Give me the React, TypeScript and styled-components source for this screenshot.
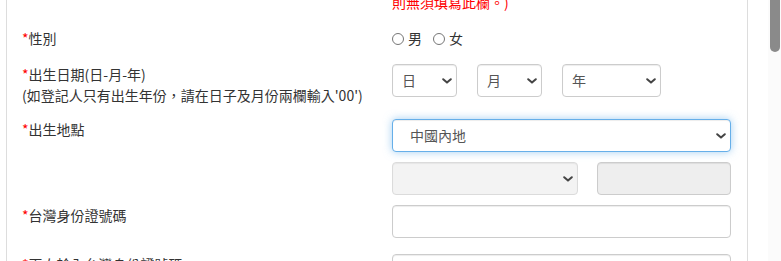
import React from "react";
import styled, { createGlobalStyle, css } from "styled-components";

const GlobalStyle = createGlobalStyle`
    html, body {
        margin: 0;
        padding: 0;
        background: #fff;
        overflow: hidden;
    }
    body {
        font-family: "Noto Sans CJK TC", "Liberation Sans", sans-serif;
        font-size: 14px;
        color: #333;
    }
`;

// --- Page shell ---
const Page = styled.div`
    display: flex;
    height: 261px;
    overflow: hidden;
`;

const Main = styled.div`
    flex: 1;
    padding-left: 6px;
    overflow: hidden;
`;

const Panel = styled.div`
    width: 742px;
    border-left: 1px solid #ddd;
    border-right: 1px solid #ddd;
    padding: 0 16px 0 15px;
    box-sizing: border-box;
    min-height: 400px;
    margin-top: -8px; // page is scrolled a little: previous help text is cut at the top
`;

// Fake browser scrollbar on the right edge
const ScrollTrack = styled.div`
    width: 13px;
    flex-shrink: 0;
    background: #fbfbfb;
    display: flex;
    justify-content: flex-end;
    padding-right: 1px;
    box-sizing: border-box;
`;

const ScrollThumb = styled.div`
    width: 10px;
    height: 52px;
    background: #8a8a8a;
    border-radius: 0 0 5px 5px;
`;

// --- Form rows ---
const FormRow = styled.div<{ $gap: number }>`
    display: grid;
    grid-template-columns: 370px 339px;
    align-items: start;
    margin-bottom: ${({ $gap }) => $gap}px;
`;

const Label = styled.label`
    line-height: 21px;
    color: #333;
`;

const Required = styled.span`
    color: #f00;
`;

const HelpText = styled.div`
    grid-column: 2;
    color: #f00;
    line-height: 20px;
`;

const Controls = styled.div`
    display: flex;
    flex-direction: column;
    gap: 10px;
`;

const InlineControls = styled.div`
    display: flex;
    align-items: center;
    gap: 20px;
`;

const SplitControls = styled.div`
    display: grid;
    grid-template-columns: 186px 1fr;
    gap: 19px;
`;

// --- Radios ---
const RadioGroup = styled.div`
    display: flex;
    align-items: center;
    height: 21px;
`;

const RadioLabel = styled.label`
    display: inline-flex;
    align-items: center;
    gap: 4px;
    margin-right: 11px;
    line-height: 21px;
`;

const Radio = styled.input.attrs({ type: "radio" })`
    appearance: none;
    width: 12px;
    height: 12px;
    margin: 0;
    border: 1px solid #767676;
    border-radius: 50%;
    background: #fff;
    box-sizing: border-box;
`;

// --- Selects & inputs ---
const controlBase = css<{ $disabled?: boolean }>`
    width: 100%;
    height: 33px;
    box-sizing: border-box;
    border: 1px solid #ccc;
    border-radius: 4px;
    background: ${({ $disabled }) => ($disabled ? "#eee" : "#fff")};
    box-shadow: inset 0 1px 1px rgba(0, 0, 0, 0.075);
    font-family: "Noto Sans CJK TC", "Liberation Sans", sans-serif;
    font-size: 14px;
    color: #555;
    outline: none;
`;

const SelectWrap = styled.div<{ $width?: number }>`
    position: relative;
    width: ${({ $width }) => ($width ? `${$width}px` : "100%")};
    flex-shrink: 0;
`;

const SelectBox = styled.select<{ $disabled?: boolean; $focused?: boolean; $indent?: number }>`
    ${controlBase};
    appearance: none;
    padding: 0 24px 0 ${({ $indent }) => $indent ?? 9}px;
    line-height: 31px;
    ${({ $focused }) =>
        $focused &&
        css`
            border-color: #66afe9;
            box-shadow: inset 0 1px 1px rgba(0, 0, 0, 0.075), 0 0 8px rgba(102, 175, 233, 0.6);
        `}
`;

const Chevron = styled.svg`
    position: absolute;
    right: 5px;
    top: 50%;
    margin-top: -3px;
    pointer-events: none;
`;

const TextInput = styled.input<{ $disabled?: boolean }>`
    ${controlBase};
    padding: 0 12px;
`;

interface SelectProps {
    value: string;
    width?: number;
    disabled?: boolean;
    focused?: boolean;
    indent?: number;
}

const Select: React.FC<SelectProps> = ({ value, width, disabled, focused, indent }) => (
    <SelectWrap $width={width}>
        <SelectBox $disabled={disabled} $focused={focused} $indent={indent} disabled={disabled} defaultValue={value}>
            <option value={value}>{value}</option>
        </SelectBox>
        <Chevron width="10" height="6" viewBox="0 0 10 6">
            <path d="M1.2 1.2 L5 4.6 L8.8 1.2" fill="none" stroke="#444" strokeWidth="2" strokeLinecap="round" strokeLinejoin="round" />
        </Chevron>
    </SelectWrap>
);

const App: React.FC = () => {
    return (
        <>
            <GlobalStyle />
            <Page>
                <Main>
                    <Panel>
                        <FormRow $gap={16}>
                            <HelpText>則無須填寫此欄。)</HelpText>
                        </FormRow>

                        <FormRow $gap={15}>
                            <Label>
                                <Required>*</Required>性別
                            </Label>
                            <RadioGroup>
                                <RadioLabel>
                                    <Radio name="sex" />男
                                </RadioLabel>
                                <RadioLabel>
                                    <Radio name="sex" />女
                                </RadioLabel>
                            </RadioGroup>
                        </FormRow>

                        <FormRow $gap={13}>
                            <Label>
                                <Required>*</Required>出生日期(日-月-年)
                                <br />
                                (如登記人只有出生年份，請在日子及月份兩欄輸入'00')
                            </Label>
                            <InlineControls>
                                <Select value="日" width={65} />
                                <Select value="月" width={65} />
                                <Select value="年" width={99} />
                            </InlineControls>
                        </FormRow>

                        <FormRow $gap={10}>
                            <Label>
                                <Required>*</Required>出生地點
                            </Label>
                            <Controls>
                                <Select value="中國內地" focused indent={17} />
                                <SplitControls>
                                    <Select value="" disabled />
                                    <TextInput $disabled disabled />
                                </SplitControls>
                            </Controls>
                        </FormRow>

                        <FormRow $gap={16}>
                            <Label>
                                <Required>*</Required>台灣身份證號碼
                            </Label>
                            <TextInput />
                        </FormRow>

                        <FormRow $gap={16}>
                            <Label>
                                <Required>*</Required>再次輸入台灣身份證號碼
                            </Label>
                            <TextInput />
                        </FormRow>
                    </Panel>
                </Main>
                <ScrollTrack>
                    <ScrollThumb />
                </ScrollTrack>
            </Page>
        </>
    );
};

export default App;
